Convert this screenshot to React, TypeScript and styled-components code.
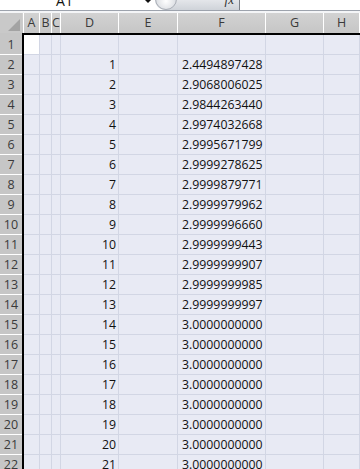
import React from "react";
import styled, { createGlobalStyle } from "styled-components";

const Global = createGlobalStyle`
  html, body { margin: 0; padding: 0; background: #ffffff; }
  body { width: 360px; height: 469px; overflow: hidden; font-family: "Open Sans", "Liberation Sans", sans-serif; }
  * { box-sizing: border-box; }
`;

const Sheet = styled.div`
  width: 360px;
  height: 469px;
  overflow: hidden;
  display: flex;
  flex-direction: column;
  background: #ffffff;
`;

const FormulaBar = styled.div`
  height: 11px;
  display: flex;
  overflow: hidden;
  border-bottom: 1px solid #9da3ad;
  flex-shrink: 0;
`;

const NameBox = styled.div`
  width: 155px;
  display: flex;
  align-items: flex-end;
  position: relative;
  background: #ffffff;
`;

const NameText = styled.span`
  flex: 1;
  text-align: center;
  font-size: 14px;
  line-height: 14px;
  height: 14px;
  margin-bottom: 2px;
  padding-right: 26px;
  color: #111;
`;

const DropArrow = styled.span`
  position: absolute;
  left: 145px;
  top: 0;
  width: 0;
  height: 0;
  border-left: 3px solid transparent;
  border-right: 3px solid transparent;
  border-top: 3px solid #111;
`;

const FxArea = styled.div`
  width: 85px;
  display: flex;
  align-items: flex-end;
  justify-content: flex-end;
  padding-right: 5px;
  background: linear-gradient(#e4e6ea, #cfd3d9);
  border-bottom-left-radius: 10px;
  border-right: 1px solid #7b8088;
  position: relative;
`;

const RoundBtn = styled.span`
  position: absolute;
  left: 0;
  bottom: 0;
  width: 22px;
  height: 22px;
  border-radius: 50%;
  background: radial-gradient(circle at 50% 60%, #ffffff, #d8dbe0 70%, #b9bec6);
  border: 1px solid #a9aeb6;
`;

const FxText = styled.span`
  font-family: "Liberation Serif", serif;
  font-style: italic;
  font-size: 13px;
  line-height: 13px;
  height: 13px;
  margin-bottom: 4px;
  color: #333;
`;

const FormulaInput = styled.div`
  flex: 1;
  background: #ffffff;
`;

const Gap = styled.div`
  height: 2px;
  background: #f4f5f7;
  flex-shrink: 0;
`;

const Grid = styled.div`
  display: grid;
  grid-template-columns: 22px 2px 16px 12px 9px 58px 59px 88px 58px 1fr;
  grid-template-rows: 20px 2px repeat(22, 20px);
  flex: 1;
  align-content: start;
`;

const Corner = styled.div`
  background: #c9c9c9;
  display: flex;
  align-items: flex-end;
  justify-content: flex-end;
  padding: 0 2px 2px 0;
`;

const HeaderCell = styled.div`
  background: linear-gradient(#d2d2d2, #c6c6c6);
  border-right: 1px solid #ffffff;
  color: #3a3a3a;
  font-size: 12.5px;
  display: flex;
  align-items: center;
  justify-content: center;
  line-height: 20px;
`;

const HeaderGap = styled.div`
  background: linear-gradient(#d2d2d2, #c6c6c6);
  border-right: 1px solid #ffffff;
`;

const UnderCorner = styled.div`
  background: #c6c6c6;
  grid-column: 1 / 2;
`;

const BlackV = styled.div`
  background: #000000;
`;

const BlackH = styled.div`
  background: #000000;
  grid-column: 2 / -1;
`;

const RowHead = styled.div`
  background: #c6c6c6;
  border-bottom: 1px solid #ffffff;
  color: #3a3a3a;
  font-size: 12.5px;
  display: flex;
  align-items: center;
  justify-content: center;
  padding-bottom: 1px;
`;

const Cell = styled.div<{ $active?: boolean; $align?: "left" | "right" }>`
  background: ${(p) => (p.$active ? "#ffffff" : "#e8eaf4")};
  border-right: 1px solid #d2d6e4;
  border-bottom: 1px solid #d2d6e4;
  color: #111111;
  font-size: 12.3px;
  display: flex;
  align-items: center;
  justify-content: ${(p) => (p.$align === "right" ? "flex-end" : "flex-start")};
  padding: 0 2px 1px 4px;
  white-space: nowrap;
  overflow: hidden;
`;

const values = [
  "2.4494897428",
  "2.9068006025",
  "2.9844263440",
  "2.9974032668",
  "2.9995671799",
  "2.9999278625",
  "2.9999879771",
  "2.9999979962",
  "2.9999996660",
  "2.9999999443",
  "2.9999999907",
  "2.9999999985",
  "2.9999999997",
  "3.0000000000",
  "3.0000000000",
  "3.0000000000",
  "3.0000000000",
  "3.0000000000",
  "3.0000000000",
  "3.0000000000",
  "3.0000000000",
];

const letters = ["A", "B", "C", "D", "E", "F", "G", "H"];

export default function App() {
  const rows: React.ReactNode[] = [];
  for (let r = 1; r <= 22; r++) {
    const d = r >= 2 ? String(r - 1) : "";
    const f = r >= 2 ? values[r - 2] : "";
    rows.push(
      <React.Fragment key={r}>
        <RowHead>{r}</RowHead>
        <BlackV />
        <Cell $active={r === 1} />
        <Cell />
        <Cell />
        <Cell $align="right">{d}</Cell>
        <Cell />
        <Cell>{f}</Cell>
        <Cell />
        <Cell />
      </React.Fragment>
    );
  }
  return (
    <Sheet>
      <Global />
      <FormulaBar>
        <NameBox>
          <NameText>A1</NameText>
          <DropArrow />
        </NameBox>
        <FxArea>
          <RoundBtn />
          <FxText>fx</FxText>
        </FxArea>
        <FormulaInput />
      </FormulaBar>
      <Gap />
      <Grid>
        <Corner>
          <svg width="12" height="12" viewBox="0 0 12 12">
            <polygon points="12,0 12,12 0,12" fill="#a3a3a3" />
          </svg>
        </Corner>
        <HeaderGap />
        {letters.map((l) => (
          <HeaderCell key={l}>{l}</HeaderCell>
        ))}
        <UnderCorner />
        <BlackH />
        {rows}
      </Grid>
    </Sheet>
  );
}
